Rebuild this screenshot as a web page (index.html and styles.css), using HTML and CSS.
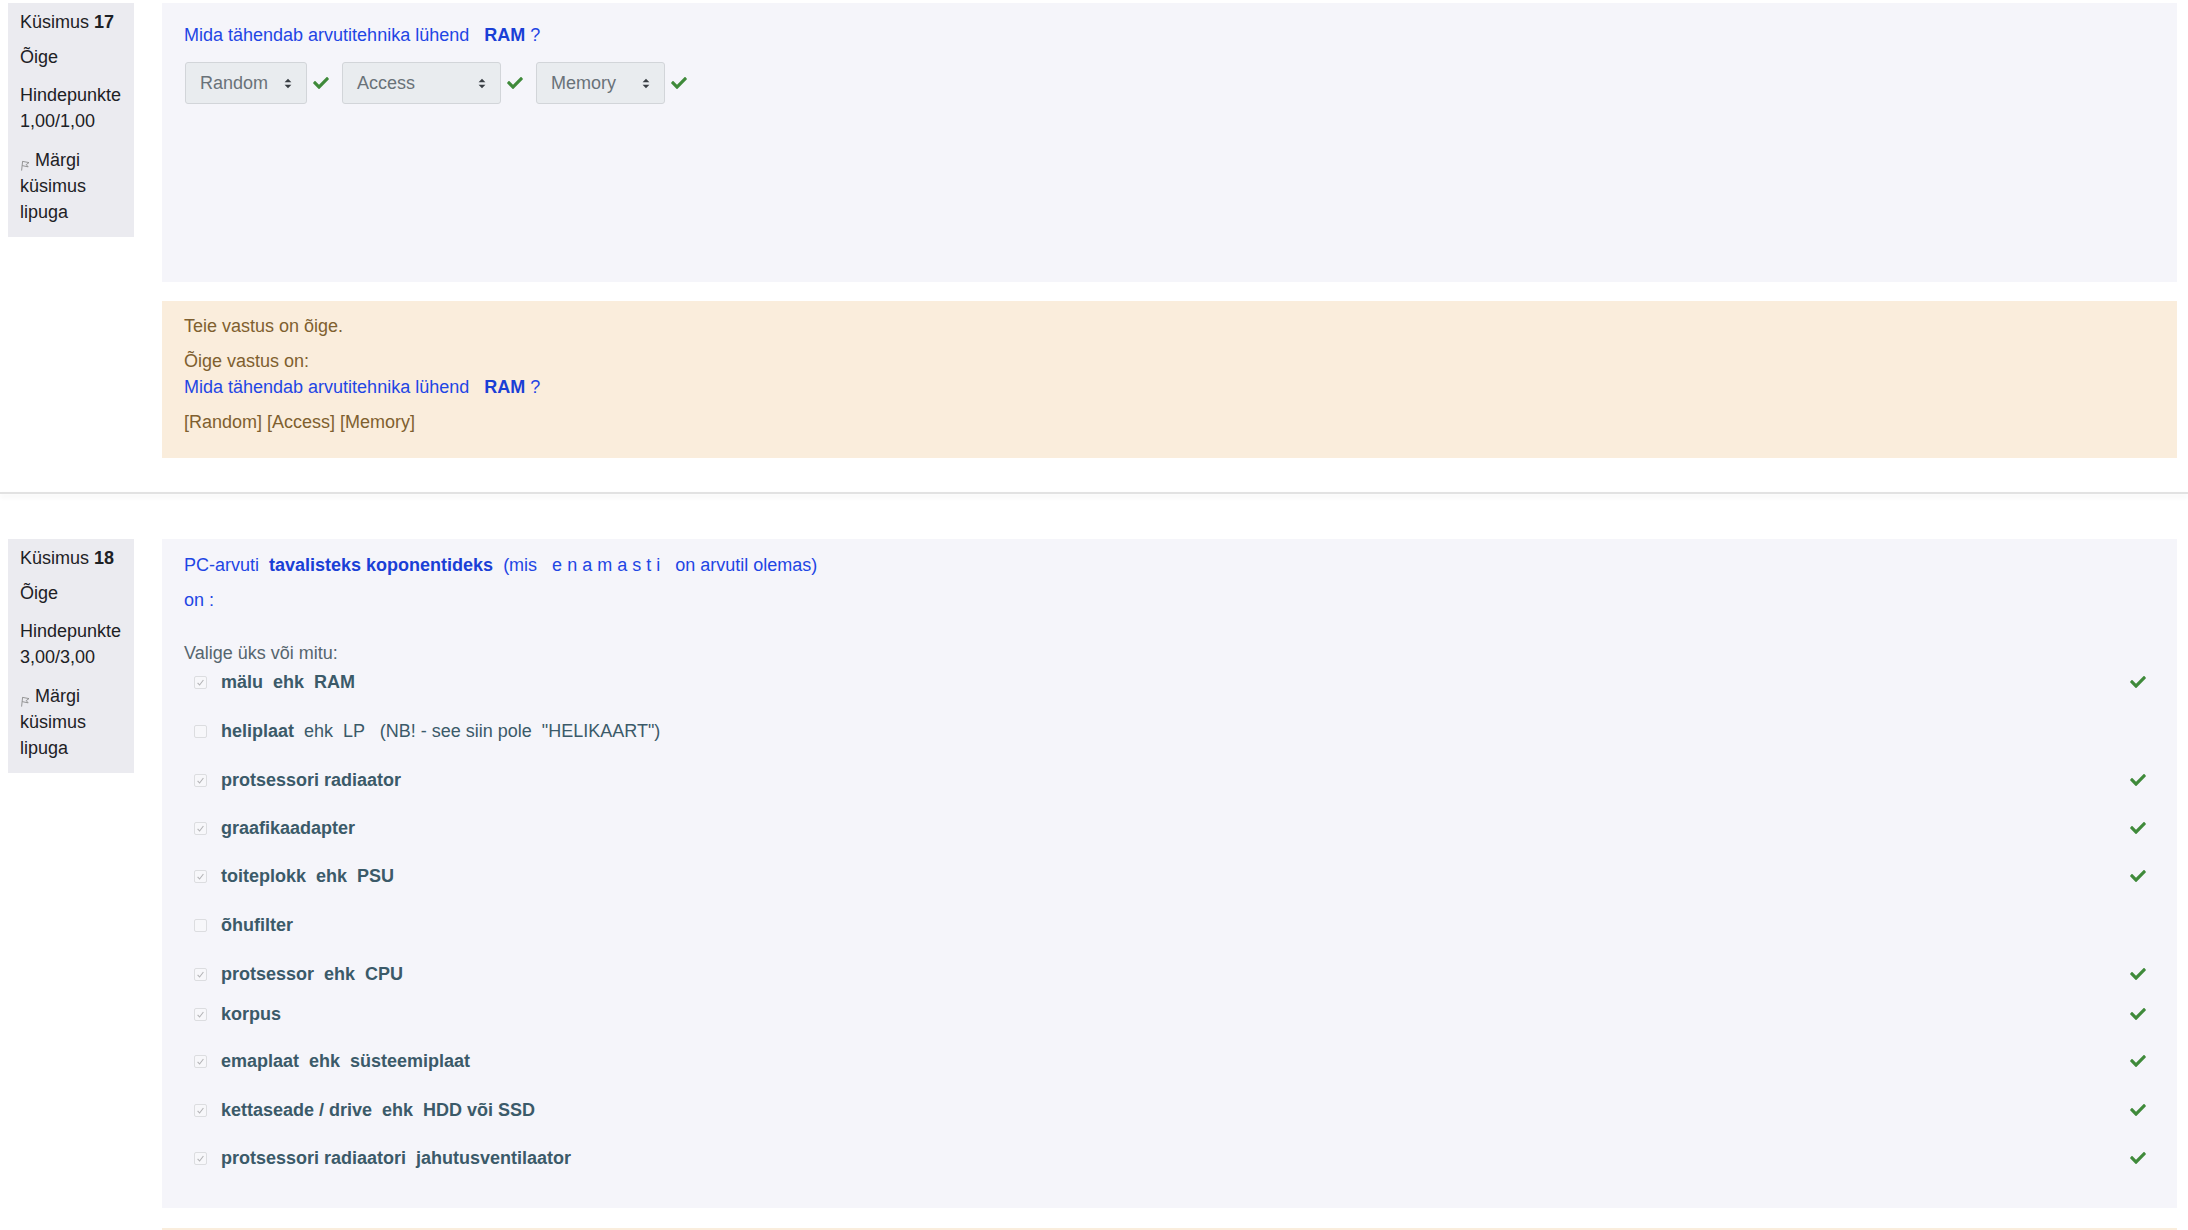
FILE: index.html
```html
<!DOCTYPE html>
<html lang="et">
<head>
<meta charset="utf-8">
<title>Küsimused</title>
<link rel="stylesheet" href="styles.css">
</head>
<body>
<div class="page">

  <div class="que que-17">
    <div class="info">
      <div class="info-no">Küsimus <b>17</b></div>
      <div class="info-state">Õige</div>
      <div class="info-grade">Hindepunkte<br>1,00/1,00</div>
      <div class="info-flag"><svg class="flag" width="10" height="11" viewBox="0 0 10 11"><path d="M1.6 10.6 L2.6 1.2 M2.6 1.4 L9 2.6 L6.2 4.6 L8.2 6.9 L2.2 5.6" fill="none" stroke="#8c8c8c" stroke-width="0.9"/></svg> Märgi küsimus lipuga</div>
    </div>
    <div class="content">
      <div class="formulation formulation-17">
        <div class="qtext">Mida tähendab arvutitehnika lühend   <b>RAM</b> ?</div>
        <div class="selrow">
          <div class="sel w-random"><span>Random</span><svg class="arrow" width="8" height="11" viewBox="0 0 8 11"><path d="M4 0.8 L7.4 4.3 H0.6 Z M4 10.2 L7.4 6.7 H0.6 Z" fill="#3a3f44"/></svg></div>
          <svg class="ok" width="16" height="12" viewBox="0 62 512 388"><path d="M173.9 439.4l-166.4-166.4c-10-10-10-26.2 0-36.2l36.2-36.2c10-10 26.2-10 36.2 0L192 312.7 432.1 72.6c10-10 26.2-10 36.2 0l36.2 36.2c10 10 10 26.2 0 36.2l-294.4 294.4c-10 10-26.2 10-36.2 0z" fill="#3f8a3a"/></svg>
          <div class="sel w-access"><span>Access</span><svg class="arrow" width="8" height="11" viewBox="0 0 8 11"><path d="M4 0.8 L7.4 4.3 H0.6 Z M4 10.2 L7.4 6.7 H0.6 Z" fill="#3a3f44"/></svg></div>
          <svg class="ok" width="16" height="12" viewBox="0 62 512 388"><path d="M173.9 439.4l-166.4-166.4c-10-10-10-26.2 0-36.2l36.2-36.2c10-10 26.2-10 36.2 0L192 312.7 432.1 72.6c10-10 26.2-10 36.2 0l36.2 36.2c10 10 10 26.2 0 36.2l-294.4 294.4c-10 10-26.2 10-36.2 0z" fill="#3f8a3a"/></svg>
          <div class="sel w-memory"><span>Memory</span><svg class="arrow" width="8" height="11" viewBox="0 0 8 11"><path d="M4 0.8 L7.4 4.3 H0.6 Z M4 10.2 L7.4 6.7 H0.6 Z" fill="#3a3f44"/></svg></div>
          <svg class="ok" width="16" height="12" viewBox="0 62 512 388"><path d="M173.9 439.4l-166.4-166.4c-10-10-10-26.2 0-36.2l36.2-36.2c10-10 26.2-10 36.2 0L192 312.7 432.1 72.6c10-10 26.2-10 36.2 0l36.2 36.2c10 10 10 26.2 0 36.2l-294.4 294.4c-10 10-26.2 10-36.2 0z" fill="#3f8a3a"/></svg>
        </div>
      </div>
      <div class="outcome">
        <div>Teie vastus on õige.</div>
        <div class="gap9">Õige vastus on:</div>
        <div class="qtext">Mida tähendab arvutitehnika lühend   <b>RAM</b> ?</div>
        <div class="gap9">[Random] [Access] [Memory]</div>
      </div>
    </div>
  </div>

  <div class="sep"></div>

  <div class="que que-18">
    <div class="info">
      <div class="info-no">Küsimus <b>18</b></div>
      <div class="info-state">Õige</div>
      <div class="info-grade">Hindepunkte<br>3,00/3,00</div>
      <div class="info-flag"><svg class="flag" width="10" height="11" viewBox="0 0 10 11"><path d="M1.6 10.6 L2.6 1.2 M2.6 1.4 L9 2.6 L6.2 4.6 L8.2 6.9 L2.2 5.6" fill="none" stroke="#8c8c8c" stroke-width="0.9"/></svg> Märgi küsimus lipuga</div>
    </div>
    <div class="content">
      <div class="formulation formulation-18">
        <div class="qtext">PC-arvuti  <b>tavalisteks koponentideks</b>  (mis   e n a m a s t i   on arvutil olemas)</div>
        <div class="qtext gap9">on :</div>
        <div class="prompt">Valige üks või mitu:</div>
        <div class="answers">
          <div class="ans p49"><span class="cb on"><svg width="11" height="11" viewBox="0 0 11 11"><path d="M2.6 5.8 L4.6 8 L8.4 3" fill="none" stroke="#b3b3b6" stroke-width="1.1"/></svg></span><span class="atext"><b>mälu  ehk  RAM</b></span><svg class="mark" width="16" height="12" viewBox="0 62 512 388"><path d="M173.9 439.4l-166.4-166.4c-10-10-10-26.2 0-36.2l36.2-36.2c10-10 26.2-10 36.2 0L192 312.7 432.1 72.6c10-10 26.2-10 36.2 0l36.2 36.2c10 10 10 26.2 0 36.2l-294.4 294.4c-10 10-26.2 10-36.2 0z" fill="#3f8a3a"/></svg></div>
          <div class="ans p49"><span class="cb"></span><span class="atext"><b>heliplaat</b>  ehk  LP   (NB! - see siin pole  "HELIKAART")</span></div>
          <div class="ans p48"><span class="cb on"><svg width="11" height="11" viewBox="0 0 11 11"><path d="M2.6 5.8 L4.6 8 L8.4 3" fill="none" stroke="#b3b3b6" stroke-width="1.1"/></svg></span><span class="atext"><b>protsessori radiaator</b></span><svg class="mark" width="16" height="12" viewBox="0 62 512 388"><path d="M173.9 439.4l-166.4-166.4c-10-10-10-26.2 0-36.2l36.2-36.2c10-10 26.2-10 36.2 0L192 312.7 432.1 72.6c10-10 26.2-10 36.2 0l36.2 36.2c10 10 10 26.2 0 36.2l-294.4 294.4c-10 10-26.2 10-36.2 0z" fill="#3f8a3a"/></svg></div>
          <div class="ans p48"><span class="cb on"><svg width="11" height="11" viewBox="0 0 11 11"><path d="M2.6 5.8 L4.6 8 L8.4 3" fill="none" stroke="#b3b3b6" stroke-width="1.1"/></svg></span><span class="atext"><b>graafikaadapter</b></span><svg class="mark" width="16" height="12" viewBox="0 62 512 388"><path d="M173.9 439.4l-166.4-166.4c-10-10-10-26.2 0-36.2l36.2-36.2c10-10 26.2-10 36.2 0L192 312.7 432.1 72.6c10-10 26.2-10 36.2 0l36.2 36.2c10 10 10 26.2 0 36.2l-294.4 294.4c-10 10-26.2 10-36.2 0z" fill="#3f8a3a"/></svg></div>
          <div class="ans p49"><span class="cb on"><svg width="11" height="11" viewBox="0 0 11 11"><path d="M2.6 5.8 L4.6 8 L8.4 3" fill="none" stroke="#b3b3b6" stroke-width="1.1"/></svg></span><span class="atext"><b>toiteplokk  ehk  PSU</b></span><svg class="mark" width="16" height="12" viewBox="0 62 512 388"><path d="M173.9 439.4l-166.4-166.4c-10-10-10-26.2 0-36.2l36.2-36.2c10-10 26.2-10 36.2 0L192 312.7 432.1 72.6c10-10 26.2-10 36.2 0l36.2 36.2c10 10 10 26.2 0 36.2l-294.4 294.4c-10 10-26.2 10-36.2 0z" fill="#3f8a3a"/></svg></div>
          <div class="ans p49"><span class="cb"></span><span class="atext"><b>õhufilter</b></span></div>
          <div class="ans p40"><span class="cb on"><svg width="11" height="11" viewBox="0 0 11 11"><path d="M2.6 5.8 L4.6 8 L8.4 3" fill="none" stroke="#b3b3b6" stroke-width="1.1"/></svg></span><span class="atext"><b>protsessor  ehk  CPU</b></span><svg class="mark" width="16" height="12" viewBox="0 62 512 388"><path d="M173.9 439.4l-166.4-166.4c-10-10-10-26.2 0-36.2l36.2-36.2c10-10 26.2-10 36.2 0L192 312.7 432.1 72.6c10-10 26.2-10 36.2 0l36.2 36.2c10 10 10 26.2 0 36.2l-294.4 294.4c-10 10-26.2 10-36.2 0z" fill="#3f8a3a"/></svg></div>
          <div class="ans p47"><span class="cb on"><svg width="11" height="11" viewBox="0 0 11 11"><path d="M2.6 5.8 L4.6 8 L8.4 3" fill="none" stroke="#b3b3b6" stroke-width="1.1"/></svg></span><span class="atext"><b>korpus</b></span><svg class="mark" width="16" height="12" viewBox="0 62 512 388"><path d="M173.9 439.4l-166.4-166.4c-10-10-10-26.2 0-36.2l36.2-36.2c10-10 26.2-10 36.2 0L192 312.7 432.1 72.6c10-10 26.2-10 36.2 0l36.2 36.2c10 10 10 26.2 0 36.2l-294.4 294.4c-10 10-26.2 10-36.2 0z" fill="#3f8a3a"/></svg></div>
          <div class="ans p49"><span class="cb on"><svg width="11" height="11" viewBox="0 0 11 11"><path d="M2.6 5.8 L4.6 8 L8.4 3" fill="none" stroke="#b3b3b6" stroke-width="1.1"/></svg></span><span class="atext"><b>emaplaat  ehk  süsteemiplaat</b></span><svg class="mark" width="16" height="12" viewBox="0 62 512 388"><path d="M173.9 439.4l-166.4-166.4c-10-10-10-26.2 0-36.2l36.2-36.2c10-10 26.2-10 36.2 0L192 312.7 432.1 72.6c10-10 26.2-10 36.2 0l36.2 36.2c10 10 10 26.2 0 36.2l-294.4 294.4c-10 10-26.2 10-36.2 0z" fill="#3f8a3a"/></svg></div>
          <div class="ans p48"><span class="cb on"><svg width="11" height="11" viewBox="0 0 11 11"><path d="M2.6 5.8 L4.6 8 L8.4 3" fill="none" stroke="#b3b3b6" stroke-width="1.1"/></svg></span><span class="atext"><b>kettaseade / drive  ehk  HDD või SSD</b></span><svg class="mark" width="16" height="12" viewBox="0 62 512 388"><path d="M173.9 439.4l-166.4-166.4c-10-10-10-26.2 0-36.2l36.2-36.2c10-10 26.2-10 36.2 0L192 312.7 432.1 72.6c10-10 26.2-10 36.2 0l36.2 36.2c10 10 10 26.2 0 36.2l-294.4 294.4c-10 10-26.2 10-36.2 0z" fill="#3f8a3a"/></svg></div>
          <div class="ans"><span class="cb on"><svg width="11" height="11" viewBox="0 0 11 11"><path d="M2.6 5.8 L4.6 8 L8.4 3" fill="none" stroke="#b3b3b6" stroke-width="1.1"/></svg></span><span class="atext"><b>protsessori radiaatori  jahutusventilaator</b></span><svg class="mark" width="16" height="12" viewBox="0 62 512 388"><path d="M173.9 439.4l-166.4-166.4c-10-10-10-26.2 0-36.2l36.2-36.2c10-10 26.2-10 36.2 0L192 312.7 432.1 72.6c10-10 26.2-10 36.2 0l36.2 36.2c10 10 10 26.2 0 36.2l-294.4 294.4c-10 10-26.2 10-36.2 0z" fill="#3f8a3a"/></svg></div>
        </div>
      </div>
      <div class="outcome outcome-next"></div>
    </div>
  </div>

</div>
</body>
</html>
```

FILE: styles.css
```css
* {
  box-sizing: border-box;
}

html,
body {
  margin: 0;
  padding: 0;
  background: #ffffff;
  overflow: hidden;
}

body {
  font-family: "Liberation Sans", Arial, Helvetica, sans-serif;
  font-size: 18px;
  line-height: 26px;
  color: #1d2125;
}

.que {
  display: flex;
  align-items: flex-start;
  gap: 28px;
  padding: 0 11px 0 8px;
}

.que-17 {
  padding-top: 3px;
  padding-bottom: 34px;
}

.que-18 {
  margin-top: 45px;
}

/* question info column */
.info {
  flex: 0 0 126px;
  width: 126px;
  background: #ebebf0;
  padding: 6px 10px 12px 12px;
}

.info-state {
  margin-top: 9px;
}

.info-grade {
  margin-top: 12px;
}

.info-flag {
  margin-top: 13px;
}

.flag {
  display: inline-block;
  vertical-align: -5px;
}

.content {
  flex: 1 1 auto;
  min-width: 0;
}

/* question body */
.formulation {
  background: #f5f5fa;
  padding: 13px 22px 37px 22px;
}

.formulation-17 {
  padding-top: 19px;
  height: 279px;
}

.qtext {
  color: #1f46e4;
  white-space: pre-wrap;
}

.qtext b {
  color: #1a3fd6;
}

.gap9 {
  margin-top: 9px;
}

/* dropdowns */
.selrow {
  display: flex;
  align-items: center;
  margin-top: 14px;
  padding-left: 1px;
}

.sel {
  display: flex;
  align-items: center;
  justify-content: space-between;
  height: 42px;
  border: 1px solid #d2d5d9;
  border-radius: 3px;
  background: #e9ecef;
  color: #697279;
  padding: 0 14px 0 14px;
  flex: none;
}

.w-random {
  width: 122px;
}

.w-access {
  width: 159px;
}

.w-memory {
  width: 129px;
}

.arrow {
  flex: none;
}

.ok {
  flex: none;
  margin: 0 13px 0 6px;
}

/* feedback */
.outcome {
  margin-top: 19px;
  background: #faeddc;
  color: #7f5f2f;
  padding: 12px 22px 23px 22px;
}

.outcome-next {
  margin-top: 20px;
  height: 80px;
  padding: 0;
}

/* separator between questions */
.sep {
  height: 2px;
  background: #e2e2e2;
  box-shadow: 0 3px 5px rgba(0, 0, 0, 0.07);
}

/* multiple choice */
.prompt {
  margin-top: 27px;
  color: #56656e;
}

.answers {
  margin-top: 3px;
  padding-left: 10px;
}

.ans {
  display: flex;
  align-items: center;
  height: 26px;
  color: #3b5a69;
  padding-right: 9px;
}

.p49 {
  margin-bottom: 23px;
}

.p48 {
  margin-bottom: 22px;
}

.p47 {
  margin-bottom: 21px;
}

.p40 {
  margin-bottom: 14px;
}

.cb {
  flex: none;
  width: 13px;
  height: 13px;
  border: 1px solid #dcdde0;
  border-radius: 2px;
  background: #f7f7fa;
  margin-right: 14px;
  display: flex;
  align-items: center;
  justify-content: center;
}

.cb svg {
  display: block;
}

.atext {
  white-space: pre-wrap;
}

.mark {
  flex: none;
  margin-left: auto;
}
```
